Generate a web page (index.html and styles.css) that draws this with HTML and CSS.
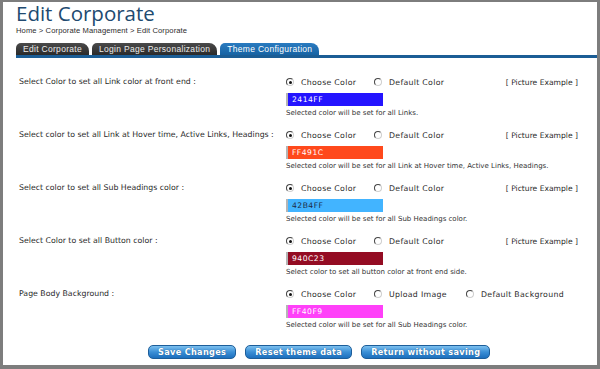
FILE: index.html
```html
<!DOCTYPE html>
<html lang="en">
<head>
<meta charset="UTF-8">
<meta name="viewport" content="width=device-width, initial-scale=1.0">
<title>Edit Corporate</title>
<link rel="stylesheet" href="styles.css">
</head>
<body>

<div class="frame">
  <header class="page-head">
    <h1>Edit Corporate</h1>
    <p class="crumbs">Home &gt; Corporate Management &gt; Edit Corporate</p>
  </header>

  <nav class="tabs">
    <span class="tab">Edit Corporate</span>
    <span class="tab">Login Page Personalization</span>
    <span class="tab active">Theme Configuration</span>
  </nav>

  <div class="settings">
    <div class="row">
      <div class="label">Select Color to set all Link color at front end :</div>
      <div class="controls">
        <div class="options">
          <span class="opt"><i class="radio on"></i>Choose Color</span>
          <span class="opt"><i class="radio"></i>Default Color</span>
          <span class="example">[ Picture Example ]</span>
        </div>
        <div class="swatch" style="background: #2414FF">2414FF</div>
        <div class="note">Selected color will be set for all Links.</div>
      </div>
    </div>

    <div class="row">
      <div class="label">Select color to set all Link at Hover time, Active Links, Headings :</div>
      <div class="controls">
        <div class="options">
          <span class="opt"><i class="radio on"></i>Choose Color</span>
          <span class="opt"><i class="radio"></i>Default Color</span>
          <span class="example">[ Picture Example ]</span>
        </div>
        <div class="swatch" style="background: #FF491C">FF491C</div>
        <div class="note">Selected color will be set for all Link at Hover time, Active Links, Headings.</div>
      </div>
    </div>

    <div class="row">
      <div class="label">Select color to set all Sub Headings color :</div>
      <div class="controls">
        <div class="options">
          <span class="opt"><i class="radio on"></i>Choose Color</span>
          <span class="opt"><i class="radio"></i>Default Color</span>
          <span class="example">[ Picture Example ]</span>
        </div>
        <div class="swatch dark-text" style="background: #42B4FF">42B4FF</div>
        <div class="note">Selected color will be set for all Sub Headings color.</div>
      </div>
    </div>

    <div class="row">
      <div class="label">Select Color to set all Button color :</div>
      <div class="controls">
        <div class="options">
          <span class="opt"><i class="radio on"></i>Choose Color</span>
          <span class="opt"><i class="radio"></i>Default Color</span>
          <span class="example">[ Picture Example ]</span>
        </div>
        <div class="swatch" style="background: #940C23">940C23</div>
        <div class="note">Select color to set all button color at front end side.</div>
      </div>
    </div>

    <div class="row">
      <div class="label">Page Body Background :</div>
      <div class="controls">
        <div class="options">
          <span class="opt"><i class="radio on"></i>Choose Color</span>
          <span class="opt wide"><i class="radio"></i>Upload Image</span>
          <span class="opt last"><i class="radio"></i>Default Background</span>
        </div>
        <div class="swatch" style="background: #FF40F9">FF40F9</div>
        <div class="note">Selected color will be set for all Sub Headings color.</div>
      </div>
    </div>
  </div>

  <div class="actions">
    <button class="btn">Save Changes</button>
    <button class="btn">Reset theme data</button>
    <button class="btn">Return without saving</button>
  </div>
</div>

</body>
</html>
```

FILE: styles.css
```css
/* page frame */
body {
  margin: 0;
  padding: 0;
  background: #fff;
  font-family: "DejaVu Sans", Verdana, sans-serif;
  color: #333;
}
.frame {
  box-sizing: border-box;
  width: 600px;
  height: 369px;
  border-style: solid;
  border-color: #7d7d7d;
  border-width: 2px 3px 4px 3px;
  overflow: hidden;
}

/* heading */
.page-head {
  padding: 1px 0 0 13px;
}
h1 {
  margin: 0;
  font-family: "Open Sans", sans-serif;
  font-weight: 400;
  font-size: 20.5px;
  line-height: 21px;
  color: #214a70;
}
.crumbs {
  margin: 2px 0 0;
  font-family: "Liberation Sans", Arial, sans-serif;
  font-size: 7.6px;
  line-height: 9px;
  color: #2c2c2c;
  letter-spacing: 0.1px;
}

/* tabs */
.tabs {
  display: flex;
  gap: 3px;
  margin: 8px 0 0 13px;
  border-bottom: 3px solid #1b5d95;
}
.tab {
  font-family: "Liberation Sans", Arial, sans-serif;
  font-size: 8.5px;
  letter-spacing: 0.3px;
  line-height: 12px;
  height: 12px;
  padding: 0 7px;
  color: #ececec;
  background: linear-gradient(#4a4a4a, #2a2a2a);
  border-radius: 5px 8px 0 0;
}
.tab.active {
  background: linear-gradient(#2a7bc0, #1763a3);
  color: #fff;
}

/* settings rows */
.settings {
  padding: 18px 0 0 16px;
}
.row {
  display: flex;
  height: 53px;
}
.label {
  width: 267px;
  flex-shrink: 0;
  font-size: 7.8px;
  line-height: 12px;
  color: #2a2a2a;
}
.controls {
  width: 292px;
}
.options {
  display: flex;
  align-items: center;
  height: 12px;
  font-size: 7.8px;
  letter-spacing: 0.3px;
  white-space: nowrap;
  color: #2a2a2a;
}
.opt {
  display: flex;
  align-items: center;
  flex-shrink: 0;
  width: 88px;
}
.opt.wide {
  width: 92px;
}
.opt.last {
  width: auto;
}
.example {
  margin-left: auto;
  font-size: 7.6px;
  letter-spacing: 0;
}
.radio {
  box-sizing: border-box;
  flex-shrink: 0;
  width: 8px;
  height: 8px;
  margin-right: 7px;
  border-radius: 50%;
  border: 1px solid #cfcfcf;
  border-top-color: #444;
  border-left-color: #444;
  background: #fff;
  position: relative;
}
.radio.on::after {
  content: "";
  position: absolute;
  left: 1.5px;
  top: 1.5px;
  width: 3px;
  height: 3px;
  border-radius: 50%;
  background: #111;
}
.swatch {
  box-sizing: border-box;
  width: 97px;
  height: 13px;
  margin-top: 5px;
  padding-left: 4px;
  border-left: 2px solid #b5b5b5;
  font-size: 7.6px;
  letter-spacing: 0.5px;
  line-height: 13px;
  color: #fff;
}
.swatch.dark-text {
  color: #1c2a44;
}
.note {
  margin-top: 2px;
  font-size: 7px;
  line-height: 10px;
  color: #333;
}

/* buttons */
.actions {
  display: flex;
  gap: 9px;
  padding: 4px 0 0 145px;
}
.btn {
  height: 14px;
  padding: 0 9px;
  border: 1px solid #1d5e9a;
  border-radius: 5px;
  background: linear-gradient(#7cc0ef, #3b8fd6 50%, #1d6fbd);
  color: #fff;
  font-family: "DejaVu Sans", Verdana, sans-serif;
  font-weight: bold;
  font-size: 8.2px;
  letter-spacing: 0.3px;
  line-height: 12px;
  text-shadow: 0 0 1px #1a4f80;
  cursor: pointer;
}
```
